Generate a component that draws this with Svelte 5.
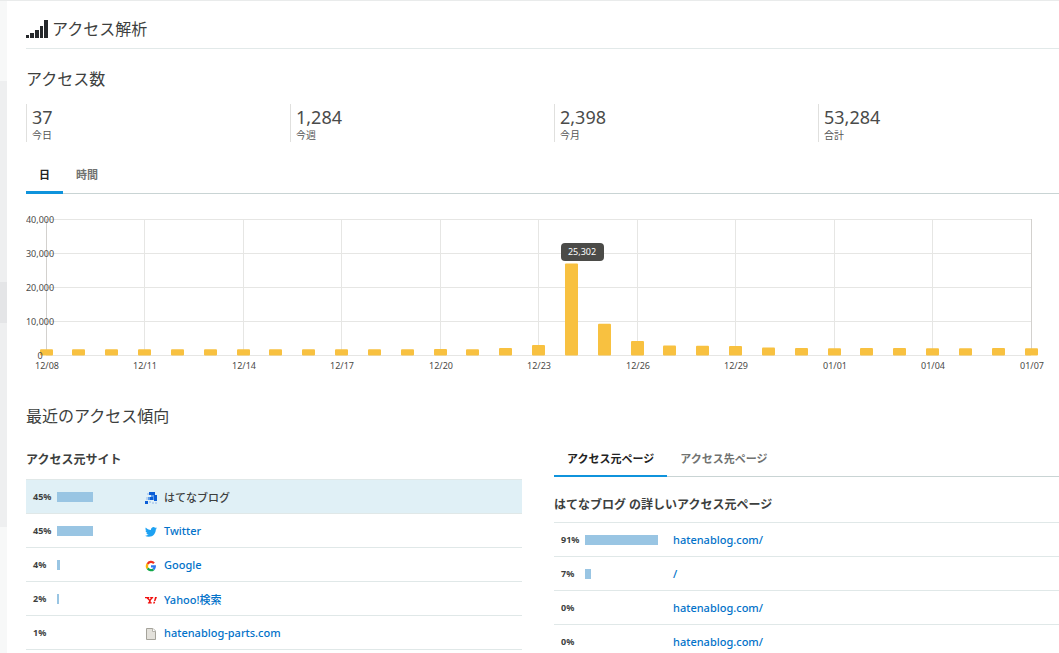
<script>
  let range = 'day'
  let pageTab = 'from'
  let width = 1056

  const stats = [
    { value: '37',     label: '今日' },
    { value: '1,284',  label: '今週' },
    { value: '2,398',  label: '今月' },
    { value: '53,284', label: '合計' },
  ]

  const ranges = [
    { id: 'day',  label: '日' },
    { id: 'hour', label: '時間' },
  ]

  const pageTabs = [
    { id: 'from', label: 'アクセス元ページ' },
    { id: 'to',   label: 'アクセス先ページ' },
  ]

  const sites = [
    { pct: 45, name: 'はてなブログ', icon: 'hatena', selected: true },
    { pct: 45, name: 'Twitter', icon: 'twitter' },
    { pct: 4,  name: 'Google', icon: 'google' },
    { pct: 2,  name: 'Yahoo!検索', icon: 'yahoo' },
    { pct: 1,  name: 'hatenablog-parts.com', icon: 'file' },
  ]

  const pages = [
    { pct: 91, url: 'hatenablog.com/' },
    { pct: 7,  url: '/' },
    { pct: 0,  url: 'hatenablog.com/' },
    { pct: 0,  url: 'hatenablog.com/' },
  ]

  // 12/08 .. 01/07
  const views = [
    40, 42, 38, 45, 40, 44, 41, 39, 40, 46, 60, 90, 120, 70, 450, 1300,
    25302, 7600, 2500, 1150, 1100, 1000, 600, 420, 380, 420, 440, 350, 400, 420, 380,
  ]
  const dates = ['12/08', '12/11', '12/14', '12/17', '12/20', '12/23', '12/26', '12/29', '01/01', '01/04', '01/07']
  const ticks = [0, 10000, 20000, 30000, 40000]
  const peak = views.indexOf(Math.max(...views))

  const left = 20
  const right = 51
  const top = 6
  const bottom = 142

  const y = v => bottom - (v / 40000) * (bottom - top)
  const barHeight = v => 6 + bottom - y(v)
  $: step = (width - left - right) / (views.length - 1)
  $: x = i => Math.floor(left + i * step)

  const meter = pct => (pct > 1 ? Math.round(pct * 0.8) : 0)
</script>

<div class="page">
  <aside class="rail">
    <div class="rail-head"></div>
    <div class="rail-menu">
      <div class="rail-current"></div>
    </div>
  </aside>

  <main>
    <header>
      <svg class="title-icon" viewBox="0 0 22 18" aria-hidden="true">
        <path d="M0 15h3v3H0zM4 13h4v5H4zM9 10h4v8H9zM14 6h3v12h-3zM18 0h4v18h-4z" />
      </svg>
      <h1>アクセス解析</h1>
    </header>

    <h2>アクセス数</h2>
    <dl class="stats">
      {#each stats as s}
        <div class="stat">
          <dd>{s.value}</dd>
          <dt>{s.label}</dt>
        </div>
      {/each}
    </dl>

    <div class="tabs" role="tablist">
      {#each ranges as r}
        <button class="tab" class:active={range === r.id} role="tab" aria-selected={range === r.id} on:click={() => (range = r.id)}>
          {r.label}
        </button>
      {/each}
    </div>

    <div class="chart" bind:clientWidth={width}>
      <svg {width} height="162" role="img" aria-label="アクセス数">
        <g class="grid">
          {#each ticks as t}
            <line x1={left} x2={x(30)} y1={y(t) + 0.5} y2={y(t) + 0.5} />
          {/each}
          {#each dates as d, i}
            <line class:edge={i === 0 || i === 10} x1={x(i * 3) + 0.5} x2={x(i * 3) + 0.5} y1={top} y2={bottom} />
          {/each}
        </g>
        {#each views as v, i}
          <rect class="bar" x={x(i) - 6} y={bottom + 0.5 - barHeight(v)} width="13" height={barHeight(v)} rx="1" />
        {/each}
        {#each ticks as t}
          <text x="14" y={y(t) + 4}>{t.toLocaleString('en-US')}</text>
        {/each}
        {#each dates as d, i}
          <text x={x(i * 3) + 1} y="156">{d}</text>
        {/each}
        <g class="tip">
          <rect x={x(peak) - 10} y="30" width="43" height="18" rx="4" />
          <text x={x(peak) + 11} y="42">{views[peak].toLocaleString('en-US')}</text>
        </g>
      </svg>
    </div>

    <h2>最近のアクセス傾向</h2>
    <div class="columns">
      <section class="sites">
        <h3>アクセス元サイト</h3>
        <table>
          <tbody>
            {#each sites as s}
              <tr class:selected={s.selected}>
                <td class="pct">{s.pct}%</td>
                <td class="meter"><div class="fill" style="width: {meter(s.pct)}px"></div></td>
                <td>
                  <a href="#{s.icon}">
                    <svg class="favicon" viewBox="0 0 12 12" aria-hidden="true">
                      {#if s.icon === 'hatena'}
                        <path fill="#b9d3f0" d="M2 1h2v2H2zM1 5h3v3H1zM7 10h2v2H7zM10 10h2v2h-2zM4 9h2v2H4z" />
                        <path fill="#5b9bea" d="M6 3h3v2H6zM3 5h2v3H3zM8 5h1v3H8z" />
                        <path fill="#0b5ed7" d="M4 0h6v3H4zM9 3h3v6H9zM5 5h3v3H5zM0 9h3v3H0z" />
                      {:else if s.icon === 'twitter'}
                        <path fill="#1da1f2" d="M12 2.2c-.4.2-.9.3-1.400.4.5-.3.900-.8 1.100-1.400-.5.300-1 .5-1.600.6A2.500 2.500 0 0 0 5.900 4.100C3.800 4 2 3 .8 1.500c-.7 1.200-.3 2.600.8 3.300-.4 0-.8-.1-1.100-.3 0 1.200.8 2.200 2 2.400-.4.1-.7.1-1.100 0 .3 1 1.200 1.700 2.300 1.700A5 5 0 0 1 0 9.700c1.100.7 2.400 1.100 3.800 1.100 4.600 0 7.100-3.900 7-7.300.500-.300.900-.800 1.200-1.300z" />
                      {:else if s.icon === 'google'}
                        <g fill="none" stroke-width="2.3">
                          <path stroke="#f0301f" d="M9 3.200A4 4 0 0 0 2.600 4" />
                          <path stroke="#fbb605" d="M2.600 4a4 4 0 0 0 0 4.400" />
                          <path stroke="#12a84a" d="M2.600 8.400a4 4 0 0 0 5.900.9" />
                          <path stroke="#3079f0" d="M8.500 9.300A4 4 0 0 0 9.800 6.300H6" />
                        </g>
                      {:else if s.icon === 'yahoo'}
                        <path fill="#f0100e" d="M0 3h4.300v1.200h-.7l1 1.300L5.900 4.200h-.7V3h3v1.200h-.6L5.700 6.500v1.700h1v1.200H2.900V8.200h1V6.500L1.500 4.200H0zM10 3h2l-1.600 4H9zM8.600 7.800h1.600l-.5 1.600H8.100z" />
                      {:else}
                        <path fill="#e3e1db" stroke="#a5a39b" d="M1.500 .5h6.500l2.500 2.500v8.500h-9z" />
                        <path fill="#fff" stroke="#b5b3ab" d="M7.500 .5v3h3" />
                      {/if}
                    </svg>
                    {s.name}
                  </a>
                </td>
              </tr>
            {/each}
          </tbody>
        </table>
      </section>

      <section class="pages">
        <div class="tabs" role="tablist">
          {#each pageTabs as t}
            <button class="tab" class:active={pageTab === t.id} role="tab" aria-selected={pageTab === t.id} on:click={() => (pageTab = t.id)}>
              {t.label}
            </button>
          {/each}
        </div>
        <h3>はてなブログ の詳しいアクセス元ページ</h3>
        <table>
          <tbody>
            {#each pages as p}
              <tr>
                <td class="pct">{p.pct}%</td>
                <td class="meter"><div class="fill" style="width: {meter(p.pct)}px"></div></td>
                <td><a href="#page">{p.url}</a></td>
              </tr>
            {/each}
          </tbody>
        </table>
      </section>
    </div>
  </main>
</div>

<style>
  :global(body) {
    background: #fff;
    color: #3d3f3e;
    font-family: "Noto Sans", "Noto Sans CJK JP", sans-serif;
    font-size: 11px;
  }

  .page {
    display: flex;
    box-sizing: border-box;
    height: 100vh;
    overflow: hidden;
    border-top: 1px solid #e9ebeb;
  }

  .rail {
    flex: 0 0 7px;
    background: #f7f8f8;
  }
  .rail-head { height: 80px; }
  .rail-menu {
    box-sizing: border-box;
    height: 446px;
    padding-top: 201px;
    background: #eeeff0;
  }
  .rail-current {
    height: 41px;
    background: #e4e5e7;
  }

  /* the content column runs on past the right edge */
  main {
    flex: 1;
    min-width: 0;
    margin-right: -23px;
    padding-left: 19px;
  }

  header {
    display: flex;
    align-items: center;
    gap: 4px;
    height: 48px;
    padding-top: 9px;
    box-sizing: border-box;
    border-bottom: 1px solid #e2e9e9;
  }
  .title-icon {
    width: 22px;
    height: 18px;
    fill: #25282b;
  }

  h1, h2, h3, dl, dd { margin: 0; }
  h1, h2 {
    font-size: 16px;
    font-weight: 400;
    line-height: 24px;
  }
  h2 { padding: 18px 0 13px; }
  h3 {
    font-size: 12px;
    font-weight: 700;
    line-height: 20px;
  }

  .stats {
    display: grid;
    grid-template-columns: repeat(4, 1fr);
  }
  .stat {
    height: 38px;
    padding-left: 5px;
    box-sizing: border-box;
    border-left: 1px solid #e0e0de;
  }
  .stat dd {
    color: #4a4b4a;
    font-size: 18px;
    line-height: 26px;
  }
  .stat dt {
    font-size: 10px;
    line-height: 10px;
    color: #555;
  }

  .tabs {
    display: flex;
    border-bottom: 1px solid #c9d4d4;
  }
  .tab {
    margin-bottom: -1px;
    padding: 0 13px;
    border: 0;
    border-bottom: 3px solid transparent;
    background: none;
    color: #707270;
    font: inherit;
    font-weight: 700;
    line-height: 32px;
    cursor: pointer;
  }
  .tab.active {
    border-bottom-color: #0f93dc;
    color: #222;
  }
  main > .tabs { margin-top: 17px; }

  .chart {
    height: 162px;
    margin-top: 19px;
    margin-bottom: 11px;
  }
  .chart svg { display: block; }
  .grid line { stroke: #e6e6e4; }
  .grid .edge { stroke: #d3d1ce; }
  .bar { fill: #f8c140; }
  .chart text {
    font-size: 9px;
    fill: #4a4a48;
    text-anchor: middle;
  }
  .tip rect { fill: #4b4b48; }
  .chart .tip text { fill: #fff; }

  .columns {
    display: grid;
    grid-template-columns: 1fr 1fr;
  }
  .sites {
    padding: 9px 32px 0 0;
  }
  .sites h3 { padding-bottom: 9px; }
  .pages { padding-top: 2px; }
  .pages .tab { border-bottom-width: 2px; }
  .pages h3 { padding: 18px 0 7px; }

  table {
    width: 100%;
    border-collapse: collapse;
    table-layout: fixed;
    border-top: 1px solid #e0e8e8;
  }
  td {
    height: 33px;
    padding: 0;
    border-bottom: 1px solid #e0e8e8;
  }
  .pct {
    width: 24px;
    padding-left: 7px;
    font-size: 9px;
    font-weight: 700;
  }
  .meter { width: 88px; }
  .fill {
    height: 10px;
    background: #99c5e3;
  }
  a {
    display: flex;
    align-items: center;
    gap: 7px;
    color: #0272c9;
    font-weight: 500;
    text-decoration: none;
  }
  .favicon {
    width: 12px;
    height: 12px;
    padding-top: 2px;
  }
  .selected { background: #e0f0f6; }
  .selected a { color: #3d3f3e; }
</style>
